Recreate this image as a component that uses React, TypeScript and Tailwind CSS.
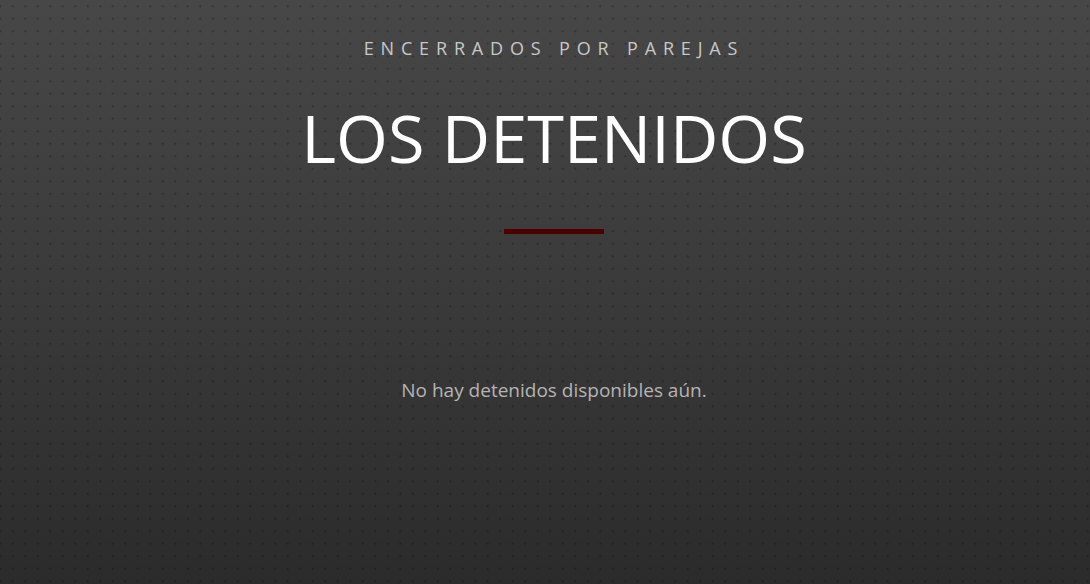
export default function App() {
  return (
    <div
      className="min-h-[584px] w-full flex flex-col items-center bg-[linear-gradient(180deg,#474747_0%,#3a3a3a_50%,#2b2b2b_100%)] font-['Open_Sans','Noto_Sans',sans-serif]"
    >
      <div className="w-full min-h-[584px] flex flex-col items-center pl-[18px] bg-[radial-gradient(circle,rgba(0,0,0,0.28)_0.8px,transparent_1.3px)] bg-[length:12.5px_12.5px] bg-[position:6.5px_0px]">
        <p className="mt-[36px] text-[18px] leading-[24px] tracking-[0.38em] text-[#c8c8c8]">
          ENCERRADOS POR PAREJAS
        </p>
        <h1 className="mt-[38px] text-[66.7px] leading-[80px] font-normal text-white">
          LOS DETENIDOS
        </h1>
        <div className="mt-[51px] w-[100px] h-[5px] bg-[#4d0000]" />
        <p className="mt-[142px] text-[19px] leading-[28px] text-[#b4b4b4]">
          No hay detenidos disponibles aún.
        </p>
      </div>
    </div>
  );
}
